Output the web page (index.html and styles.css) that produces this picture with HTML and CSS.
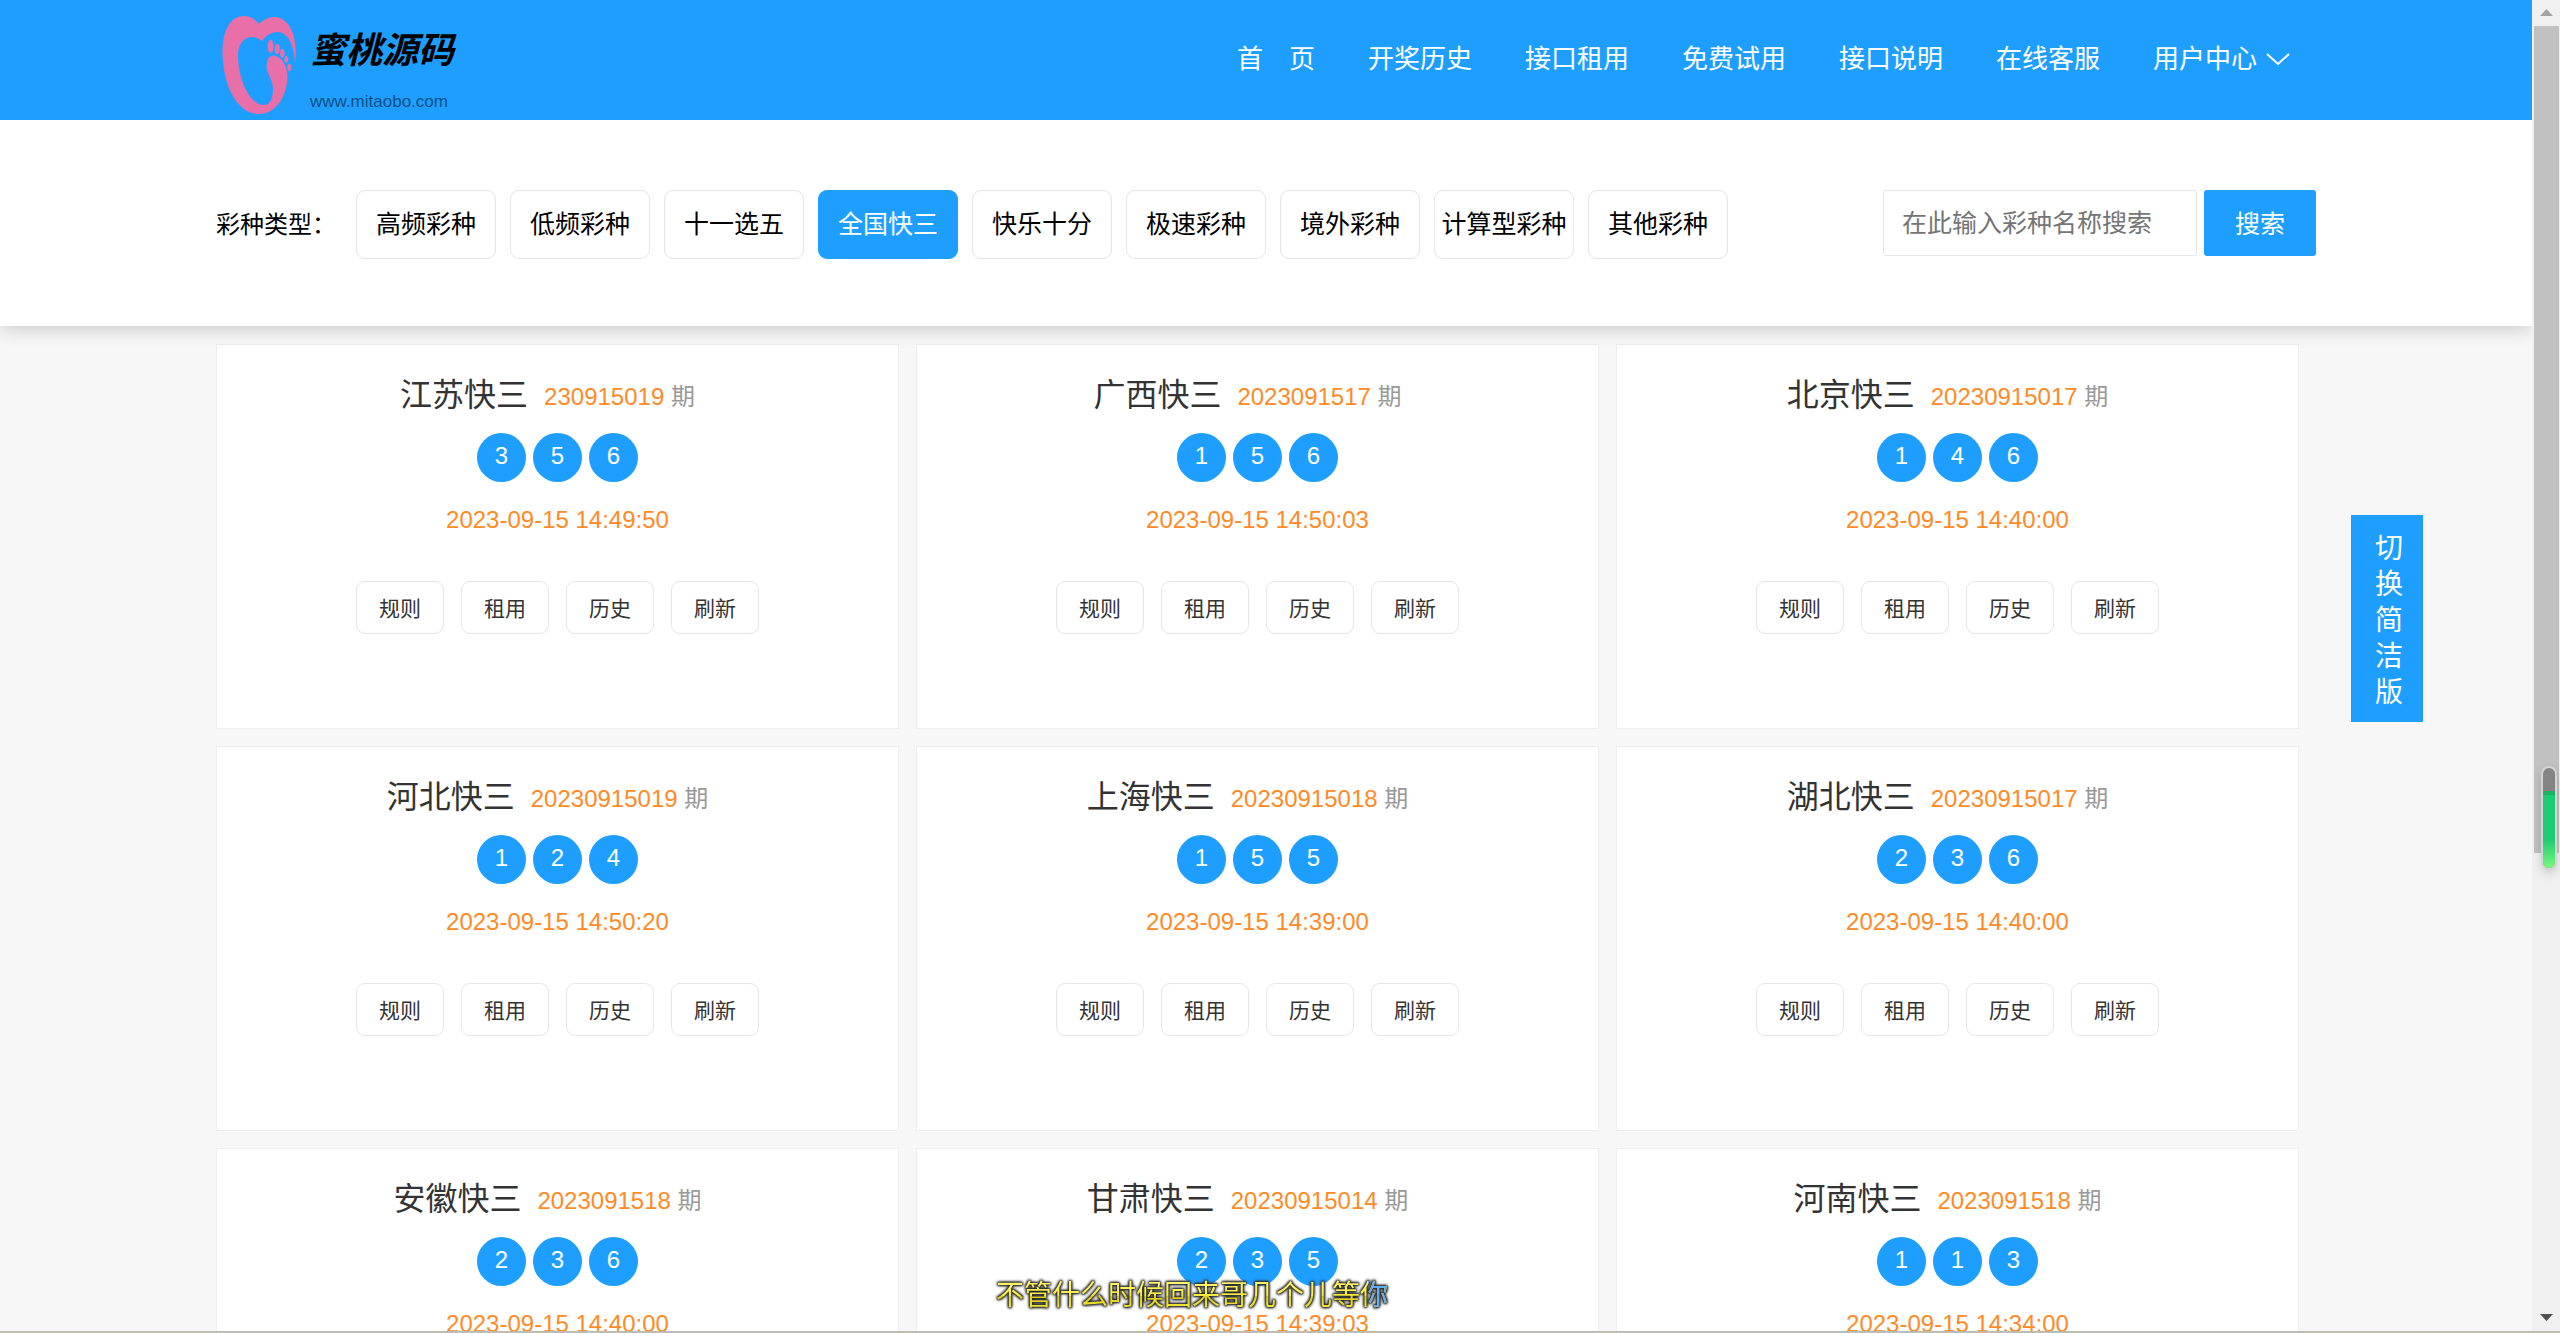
FILE: index.html
```html
<!DOCTYPE html>
<html lang="zh-CN">
<head>
<meta charset="utf-8">
<title>蜜桃源码</title>
<meta name="viewport" content="width=device-width, initial-scale=1">
<link rel="stylesheet" href="styles.css">
</head>
<body>
<div class="page">
  <header class="header">
    <div class="container header-inner">
      <a class="logo" href="#" aria-label="蜜桃源码">
        <svg class="logo-mark" viewBox="0 0 90 110" aria-hidden="true">
          <path fill="#e86fa8" d="M43 16C38 10 33 8 28 8C13 8 6.500 25 6.500 44C6.500 75 20 106 43 106C60 106 71 88 71.500 69C71.500 57 65 48 57 47.500C51 48 50 56 51 62C53 68 57 74 57 81C57 90 54 97 48 97C33 97 22 70 22 47C22 36 28 29 36 29C40 29 43 31 46 33C50 27 56 24 62 24C73 25 78 38 79 55C82 37 77 9 58 9C52 9 47 12 43 16Z"/>
          <g fill="#e86fa8">
            <ellipse cx="54.700" cy="38.300" rx="3" ry="6.600"/>
            <ellipse cx="61.300" cy="41" rx="2.500" ry="5"/>
            <ellipse cx="66.300" cy="45.300" rx="2.200" ry="4.200"/>
            <ellipse cx="70.300" cy="51.300" rx="1.900" ry="3.500"/>
            <ellipse cx="73.300" cy="59.300" rx="1.900" ry="3.500"/>
          </g>
        </svg>
        <span class="logo-text">
          <span class="logo-name">蜜桃源码</span>
          <span class="logo-url">www.mitaobo.com</span>
        </span>
      </a>
      <nav class="nav">
        <a href="#">首　页</a>
        <a href="#">开奖历史</a>
        <a href="#">接口租用</a>
        <a href="#">免费试用</a>
        <a href="#">接口说明</a>
        <a href="#">在线客服</a>
        <a class="nav-user" href="#">用户中心
          <svg class="chevron" viewBox="0 0 24 14" aria-hidden="true"><path d="M1 2L12 12L23 2" fill="none" stroke="#fff" stroke-width="2"/></svg>
        </a>
      </nav>
    </div>
  </header>

  <section class="filter">
    <div class="container filter-inner">
      <span class="filter-label">彩种类型：</span>
      <div class="types">
        <button class="type" type="button">高频彩种</button>
        <button class="type" type="button">低频彩种</button>
        <button class="type" type="button">十一选五</button>
        <button class="type type-active" type="button">全国快三</button>
        <button class="type" type="button">快乐十分</button>
        <button class="type" type="button">极速彩种</button>
        <button class="type" type="button">境外彩种</button>
        <button class="type" type="button">计算型彩种</button>
        <button class="type" type="button">其他彩种</button>
      </div>
      <form class="search">
        <input class="search-input" type="text" aria-label="彩种名称" placeholder="在此输入彩种名称搜索">
        <button class="search-button" type="button">搜索</button>
      </form>
    </div>
  </section>

  <main class="container cards">
    <article class="card">
      <h2 class="card-title"><span class="name">江苏快三</span><span class="issue"><b>230915019</b> 期</span></h2>
      <div class="balls"><span>3</span><span>5</span><span>6</span></div>
      <time class="time">2023-09-15 14:49:50</time>
      <div class="actions"><button type="button">规则</button><button type="button">租用</button><button type="button">历史</button><button type="button">刷新</button></div>
    </article>
    <article class="card">
      <h2 class="card-title"><span class="name">广西快三</span><span class="issue"><b>2023091517</b> 期</span></h2>
      <div class="balls"><span>1</span><span>5</span><span>6</span></div>
      <time class="time">2023-09-15 14:50:03</time>
      <div class="actions"><button type="button">规则</button><button type="button">租用</button><button type="button">历史</button><button type="button">刷新</button></div>
    </article>
    <article class="card">
      <h2 class="card-title"><span class="name">北京快三</span><span class="issue"><b>20230915017</b> 期</span></h2>
      <div class="balls"><span>1</span><span>4</span><span>6</span></div>
      <time class="time">2023-09-15 14:40:00</time>
      <div class="actions"><button type="button">规则</button><button type="button">租用</button><button type="button">历史</button><button type="button">刷新</button></div>
    </article>
    <article class="card">
      <h2 class="card-title"><span class="name">河北快三</span><span class="issue"><b>20230915019</b> 期</span></h2>
      <div class="balls"><span>1</span><span>2</span><span>4</span></div>
      <time class="time">2023-09-15 14:50:20</time>
      <div class="actions"><button type="button">规则</button><button type="button">租用</button><button type="button">历史</button><button type="button">刷新</button></div>
    </article>
    <article class="card">
      <h2 class="card-title"><span class="name">上海快三</span><span class="issue"><b>20230915018</b> 期</span></h2>
      <div class="balls"><span>1</span><span>5</span><span>5</span></div>
      <time class="time">2023-09-15 14:39:00</time>
      <div class="actions"><button type="button">规则</button><button type="button">租用</button><button type="button">历史</button><button type="button">刷新</button></div>
    </article>
    <article class="card">
      <h2 class="card-title"><span class="name">湖北快三</span><span class="issue"><b>20230915017</b> 期</span></h2>
      <div class="balls"><span>2</span><span>3</span><span>6</span></div>
      <time class="time">2023-09-15 14:40:00</time>
      <div class="actions"><button type="button">规则</button><button type="button">租用</button><button type="button">历史</button><button type="button">刷新</button></div>
    </article>
    <article class="card">
      <h2 class="card-title"><span class="name">安徽快三</span><span class="issue"><b>2023091518</b> 期</span></h2>
      <div class="balls"><span>2</span><span>3</span><span>6</span></div>
      <time class="time">2023-09-15 14:40:00</time>
    </article>
    <article class="card">
      <h2 class="card-title"><span class="name">甘肃快三</span><span class="issue"><b>20230915014</b> 期</span></h2>
      <div class="balls"><span>2</span><span>3</span><span>5</span></div>
      <time class="time">2023-09-15 14:39:03</time>
    </article>
    <article class="card">
      <h2 class="card-title"><span class="name">河南快三</span><span class="issue"><b>2023091518</b> 期</span></h2>
      <div class="balls"><span>1</span><span>1</span><span>3</span></div>
      <time class="time">2023-09-15 14:34:00</time>
    </article>
  </main>
</div>

<button class="switch" type="button">切换简洁版</button>
<p class="lyric">不管什么时候回来哥几个儿等你</p>

<div class="scrollbar" aria-hidden="true">
  <svg class="arrow" viewBox="0 0 13 7"><path d="M0 7L6.500 0L13 7Z" fill="#a3a3a3"/></svg>
  <div class="track"><div class="thumb"></div></div>
  <svg class="arrow" viewBox="0 0 13 7"><path d="M0 0L6.500 7L13 0Z" fill="#505050"/></svg>
</div>
<div class="meter" aria-hidden="true"><div class="meter-fill"></div></div>
<div class="edge" aria-hidden="true"></div>
</body>
</html>
```
FILE: styles.css
```css
* {
  box-sizing: border-box;
}

body {
  margin: 0;
  height: 100vh;
  overflow: hidden;
  background: #f7f7f7;
  color: #333;
  font-family: "Liberation Sans", "Noto Sans CJK SC", sans-serif;
  font-size: 24px;
}

a {
  color: inherit;
  text-decoration: none;
}

button,
input {
  margin: 0;
  padding: 0;
  font-family: inherit;
  border: 1px solid #e6e6e6;
  background: #fff;
}

.page {
  margin-right: 28px;
}

.container {
  max-width: 2100px;
  margin: 0 auto;
}

/* Header */
.header {
  position: relative;
  z-index: 1;
  background: #1e9fff;
  color: #fff;
}

.header-inner {
  display: flex;
  justify-content: space-between;
  height: 120px;
}

.logo {
  display: flex;
  gap: 4px;
  padding-top: 8px;
}

.logo-mark {
  width: 90px;
  height: 110px;
}

.logo-text {
  display: flex;
  flex-direction: column;
  gap: 12px;
  padding-top: 16px;
  color: #000;
}

.logo-name {
  font-size: 36px;
  font-weight: 700;
  font-style: italic;
  line-height: 54px;
}

.logo-url {
  font-size: 17px;
  line-height: 24px;
  color: #0c4f86;
}

.nav {
  display: flex;
  gap: 53px;
  padding-right: 26px;
  font-size: 26px;
  line-height: 118px;
}

.nav-user {
  display: flex;
  align-items: center;
  gap: 9px;
  height: 118px;
}

.chevron {
  width: 24px;
  height: 14px;
}

/* Filter bar */
.filter {
  position: relative;
  padding: 70px 0 67px;
  background: #fff;
  color: #000;
  box-shadow: 0 2px 20px rgba(0, 0, 0, 0.2);
}

.filter-inner {
  display: flex;
}

.filter-label {
  width: 140px;
  line-height: 69px;
  white-space: nowrap;
}

.types {
  display: flex;
  gap: 14px;
}

.type {
  width: 140px;
  height: 69px;
  padding-bottom: 5px;
  border-radius: 9px;
  font-size: 25px;
  color: #000;
  white-space: nowrap;
}

.type-active {
  background: #1e9fff;
  border-color: #1e9fff;
  color: #fff;
}

.search {
  display: flex;
  gap: 7px;
  margin-left: auto;
}

.search-input {
  width: 314px;
  height: 66px;
  padding: 0 18px;
  border-radius: 3px;
  font-size: 25px;
}

.search-input::placeholder {
  color: #757575;
}

.search-button {
  width: 112px;
  height: 66px;
  padding-bottom: 2px;
  border: 0;
  border-radius: 3px;
  background: #1e9fff;
  color: #fff;
  font-size: 25px;
}

/* Lottery cards */
.cards {
  display: grid;
  grid-template-columns: repeat(3, 1fr);
  gap: 17px;
  padding: 18px 17px 18px 0;
}

.card {
  display: flex;
  flex-direction: column;
  align-items: center;
  height: 385px;
  padding-top: 28px;
  border: 1px solid #eee;
  background: #fff;
}

.card-title {
  display: flex;
  gap: 16px;
  margin: 0;
  padding-right: 20px;
  font-weight: 400;
  line-height: 44px;
}

.name {
  font-size: 32px;
}

.issue {
  padding-top: 2px;
  font-size: 24px;
  color: #999;
}

.issue b {
  font-weight: 400;
  color: #ff8a26;
}

.balls {
  display: flex;
  gap: 7px;
  margin-top: 14px;
}

.balls span {
  width: 49px;
  height: 49px;
  border-radius: 50%;
  background: #1e9fff;
  color: #fff;
  line-height: 46px;
  text-align: center;
}

.time {
  margin-top: 16px;
  line-height: 44px;
  color: #ff8a26;
}

.actions {
  display: flex;
  gap: 17px;
  margin-top: 39px;
}

.actions button {
  width: 88px;
  height: 53px;
  padding-bottom: 2px;
  border-radius: 9px;
  color: #333;
  font-size: 21px;
}

/* Floating layout switch */
.switch {
  position: fixed;
  top: 515px;
  right: 137px;
  width: 72px;
  padding: 16px 20px 11px 24px;
  border: 0;
  background: #1e9fff;
  color: #fff;
  font-size: 28px;
  line-height: 36px;
}

/* Karaoke line */
.lyric {
  position: fixed;
  bottom: 16px;
  left: 996px;
  margin: 0;
  font-size: 28px;
  line-height: 42px;
  white-space: nowrap;
  color: transparent;
  background:
    linear-gradient(to right, transparent 95%, #64aef0 95%),
    linear-gradient(#fff36a 25%, #f7ea3c 50%, #d8cc1c 50%, #f5e93a 80%);
  -webkit-background-clip: text;
  background-clip: text;
  filter: drop-shadow(0 0 1px #222) drop-shadow(0 0 1px #222) drop-shadow(0 0 1px #444);
}

/* Window scrollbar */
.scrollbar {
  position: fixed;
  top: 0;
  right: 0;
  bottom: 2px;
  display: flex;
  flex-direction: column;
  align-items: center;
  width: 28px;
  padding: 9px 0 10px;
  background: #f0f0f0;
}

.arrow {
  width: 13px;
  height: 7px;
}

.track {
  flex: 1;
  width: 25px;
  margin: 10px 0;
}

.thumb {
  height: 64.7%;
  background: #c1c1c1;
}

.meter {
  position: fixed;
  top: 766px;
  right: 3px;
  width: 16px;
  height: 104px;
  padding-top: 23px;
  border: 2px solid #d4d4d4;
  border-radius: 8px;
  background: #848484;
  box-shadow: 0 4px 10px rgba(0, 0, 0, 0.15);
}

.meter-fill {
  height: 100%;
  border-top: 4px solid #19b463;
  border-radius: 2px 2px 6px 6px;
  background: linear-gradient(#1bcb72 60%, #7bf77e);
}

.edge {
  position: fixed;
  right: 0;
  bottom: 0;
  left: 0;
  height: 2px;
  background: #bfbcb4;
}
```
